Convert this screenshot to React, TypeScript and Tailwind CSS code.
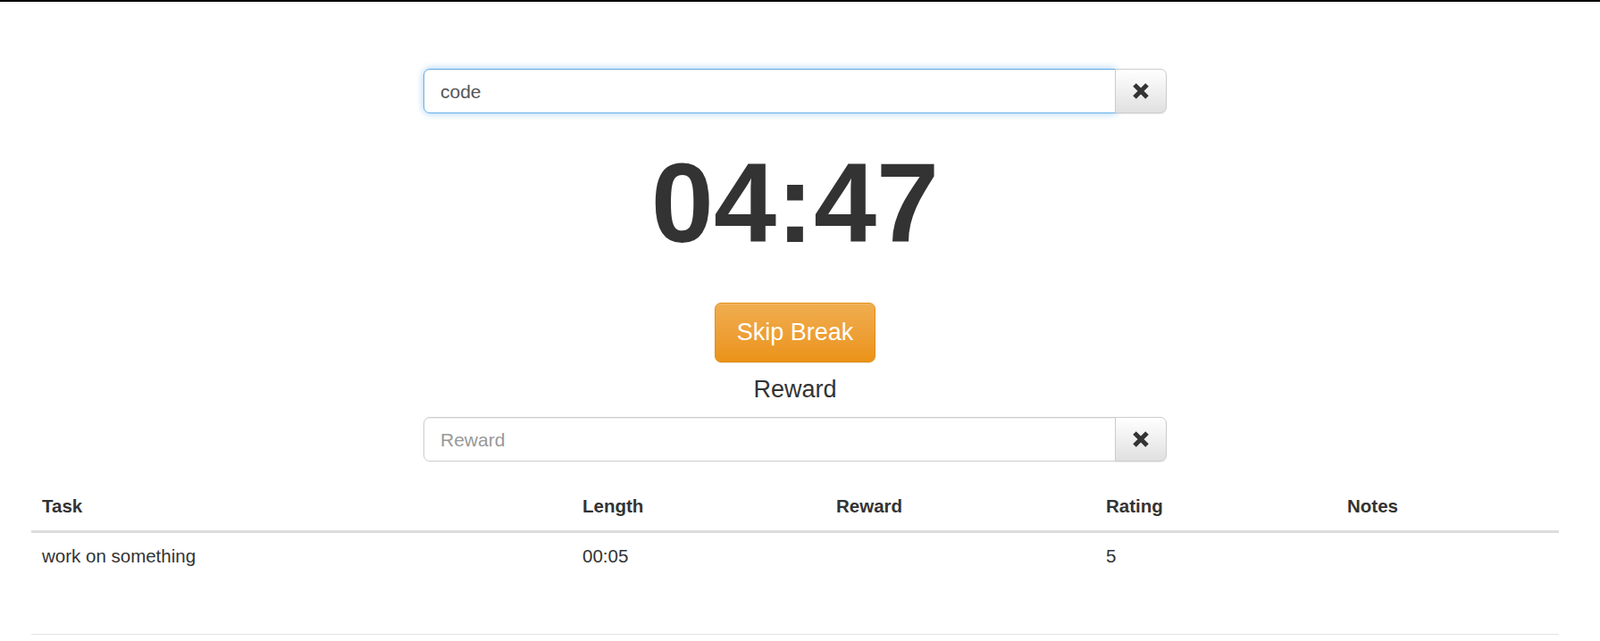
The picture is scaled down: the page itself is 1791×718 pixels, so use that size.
import React from "react";

function XIcon() {
  return (
    <svg width="18" height="18" viewBox="0 0 18 18" aria-hidden="true">
      <path d="M2 2 L16 16 M16 2 L2 16" stroke="#333" strokeWidth="5" strokeLinecap="butt" fill="none" />
    </svg>
  );
}

function InputGroup({ value, placeholder, focused }: { value?: string; placeholder: string; focused?: boolean }) {
  return (
    <div className="mx-auto flex h-[50px] w-[832px]">
      <input
        readOnly
        value={value ?? ""}
        placeholder={placeholder}
        className={
          "h-[50px] flex-1 rounded-l-[7px] border bg-white px-[18px] pt-[2px] text-[21px] text-[#555] outline-none placeholder:text-[#999] " +
          (focused
            ? "border-[#66afe9] shadow-[inset_0_1px_1px_rgba(0,0,0,0.075),0_0_9px_rgba(102,175,233,0.6)]"
            : "border-[#ccc] shadow-[inset_0_1px_1px_rgba(0,0,0,0.075)]")
        }
      />
      <button className="-ml-px flex h-[50px] w-[58px] items-center justify-center rounded-r-[7px] border border-[#ccc] bg-gradient-to-b from-white to-[#e0e0e0] shadow-[0_1px_1px_rgba(0,0,0,0.075)]">
        <XIcon />
      </button>
    </div>
  );
}

export default function App() {
  return (
    <div className="min-h-[718px] bg-white font-['Liberation_Sans',Arial,sans-serif] text-[#333]">
      <div className="h-[2px] w-full bg-black" />
      <div className="w-[1780px] pt-[75px]">
        <InputGroup value="code" placeholder="Task" focused />
        <div className="mt-[38px] h-[128px] text-center text-[126px] font-bold leading-none">04:47</div>
        <div className="mt-[46px] flex justify-center">
          <button className="h-[67px] w-[180px] rounded-[7px] border border-[#e38d13] bg-gradient-to-b from-[#f0ad4e] to-[#eb9316] text-[27px] text-white shadow-[inset_0_1px_0_rgba(255,255,255,0.15),0_1px_1px_rgba(0,0,0,0.075)]">
            Skip Break
          </button>
        </div>
        <div className="mt-[12px] text-center text-[27px] leading-[36px]">Reward</div>
        <div className="mt-[13px]">
          <InputGroup placeholder="Reward" />
        </div>
        <div className="mx-[35px] mt-[24px]">
          <table className="w-[1710px] table-fixed border-collapse text-[20.5px]">
            <colgroup>
              <col className="w-[605px]" />
              <col className="w-[284px]" />
              <col className="w-[302px]" />
              <col className="w-[270px]" />
              <col className="w-[249px]" />
            </colgroup>
            <thead>
              <tr className="border-b-[3px] border-[#ddd]">
                {["Task", "Length", "Reward", "Rating", "Notes"].map((h) => (
                  <th key={h} className="px-[12px] pb-[13px] pt-[12px] text-left align-bottom font-bold leading-[28px]">
                    {h}
                  </th>
                ))}
              </tr>
            </thead>
            <tbody>
              <tr className="border-b border-[#e4e4e4]">
                <td className="h-[115px] px-[12px] py-[12px] align-top leading-[28px]">work on something</td>
                <td className="px-[12px] py-[12px] align-top leading-[28px]">00:05</td>
                <td className="px-[12px] py-[12px] align-top leading-[28px]"></td>
                <td className="px-[12px] py-[12px] align-top leading-[28px]">5</td>
                <td className="px-[12px] py-[12px] align-top leading-[28px]"></td>
              </tr>
            </tbody>
          </table>
        </div>
      </div>
    </div>
  );
}
